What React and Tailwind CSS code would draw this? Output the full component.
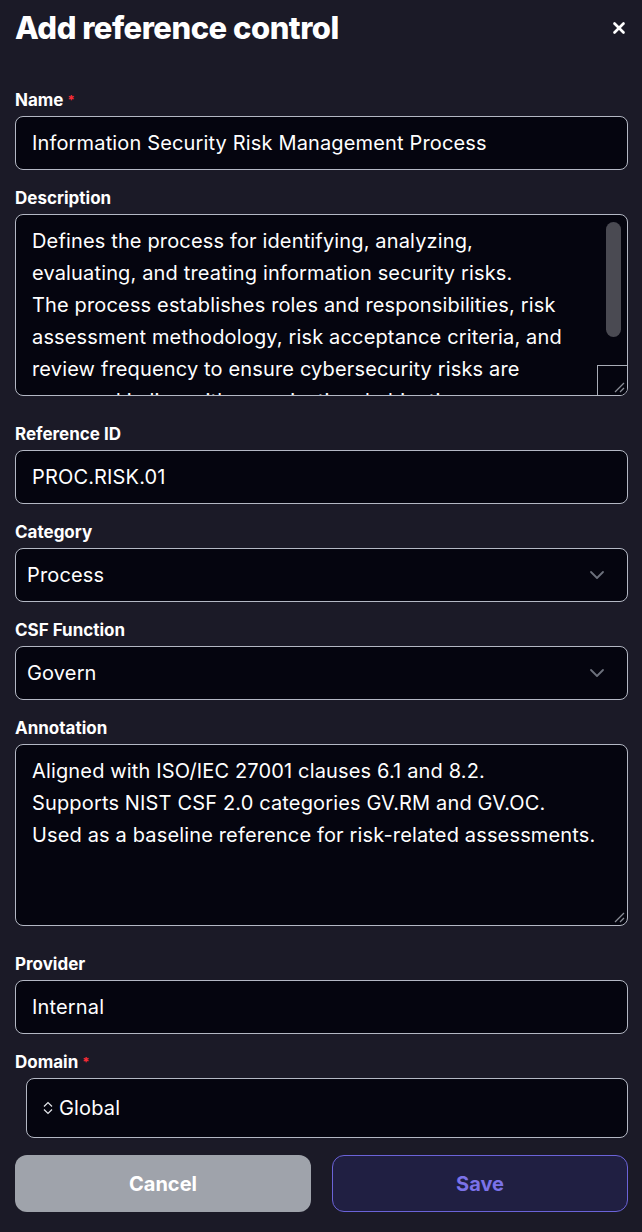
import { ChevronDown, X } from 'lucide-react';

const font = { fontFamily: 'Inter, "Noto Sans", sans-serif' };

function Label({ children, required }) {
    return (
        <div className="h-5 text-[17px] leading-5 font-bold text-white mb-[6px]">
            {children}
            {required && <span className="text-red-500 text-[13px] align-top ml-1">*</span>}
        </div>
    );
}

function Field({ label, required, children, extra }) {
    return (
        <div className={extra ? 'mb-[10px]' : ''}>
            <Label required={required}>{label}</Label>
            {children}
        </div>
    );
}

function TextInput({ value }) {
    return (
        <div className="h-[54px] flex items-center px-4 rounded-lg border border-[#b4b8c4] bg-[#05050f] text-[20px] tracking-[0.15px] text-white whitespace-nowrap">
            {value}
        </div>
    );
}

function Select({ value }) {
    return (
        <div className="h-[54px] flex items-center justify-between pl-[11px] pr-[18px] rounded-lg border border-[#b4b8c4] bg-[#05050f] text-[20px] tracking-[0.15px] text-white">
            <span>{value}</span>
            <ChevronDown className="w-6 h-6 text-[#6d717c]" strokeWidth={1.8} />
        </div>
    );
}

function ResizeGrip() {
    return (
        <svg className="absolute right-[2px] bottom-[2px] w-3 h-3" viewBox="0 0 12 12">
            <path d="M2 11 L11 2 M7 11 L11 7" stroke="#8a8d96" strokeWidth="1.3" />
        </svg>
    );
}

function TextArea({ lines, scroll }) {
    return (
        <div className="relative h-[182px] rounded-lg border border-[#b4b8c4] bg-[#05050f] overflow-hidden">
            <div className="pt-[10px] pl-4 text-[20px] tracking-[0.15px] leading-8 text-white">
                {lines.map((l, i) => (
                    <div key={i} className="whitespace-nowrap">{l}</div>
                ))}
            </div>
            {scroll && (
                <>
                    <div className="absolute right-[6px] top-[7px] w-[15px] h-[115px] rounded-full bg-[#4a4a52]" />
                    <div className="absolute right-0 bottom-0 w-[30px] h-[30px] border-l border-t border-[#a8acb6] bg-[#05050f]" />
                </>
            )}
            <ResizeGrip />
        </div>
    );
}

export default function App() {
    return (
        <div className="min-h-[1232px] bg-[#1b1a27] pl-[15px] pr-[14px] pt-[10px]" style={font}>
            <div className="flex items-center justify-between h-9 mb-[44px]">
                <h1 className="text-[31px] leading-9 font-extrabold text-white tracking-[-0.5px]">Add reference control</h1>
                <X className="w-[18px] h-[18px] text-white" strokeWidth={3.5} />
            </div>

            <div className="flex flex-col gap-[18px]">
                <Field label="Name" required>
                    <TextInput value="Information Security Risk Management Process" />
                </Field>

                <Field label="Description" extra>
                    <TextArea
                        scroll
                        lines={[
                            'Defines the process for identifying, analyzing,',
                            'evaluating, and treating information security risks.',
                            'The process establishes roles and responsibilities, risk',
                            'assessment methodology, risk acceptance criteria, and',
                            'review frequency to ensure cybersecurity risks are',
                            'managed in line with organizational objectives.',
                        ]}
                    />
                </Field>

                <Field label="Reference ID">
                    <TextInput value="PROC.RISK.01" />
                </Field>

                <Field label="Category">
                    <Select value="Process" />
                </Field>

                <Field label="CSF Function">
                    <Select value="Govern" />
                </Field>

                <Field label="Annotation" extra>
                    <TextArea
                        lines={[
                            'Aligned with ISO/IEC 27001 clauses 6.1 and 8.2.',
                            'Supports NIST CSF 2.0 categories GV.RM and GV.OC.',
                            'Used as a baseline reference for risk-related assessments.',
                        ]}
                    />
                </Field>

                <Field label="Provider">
                    <TextInput value="Internal" />
                </Field>

                <div>
                    <Label required>Domain</Label>
                    <div className="ml-[11px] h-[60px] flex items-center gap-[6px] pl-4 rounded-lg border border-[#b4b8c4] bg-[#05050f] text-[20px] tracking-[0.15px] text-white">
                        <svg className="w-[10px] h-[18px]" viewBox="0 0 10 18" fill="none" stroke="#e5e7eb" strokeWidth="1.2">
                            <path d="M1 7.5 L5 3.5 L9 7.5" />
                            <path d="M1 10.5 L5 14.5 L9 10.5" />
                        </svg>
                        <span>Global</span>
                    </div>
                </div>
            </div>

            <div className="grid grid-cols-2 gap-[21px] mt-[17px]">
                <button className="h-[57px] rounded-xl bg-[#9fa3ab] text-white text-[20px] font-bold">Cancel</button>
                <button className="h-[57px] rounded-xl bg-[#201f42] border border-[#6b63d8] text-[#7b72e8] text-[20px] font-bold">Save</button>
            </div>
        </div>
    );
}
